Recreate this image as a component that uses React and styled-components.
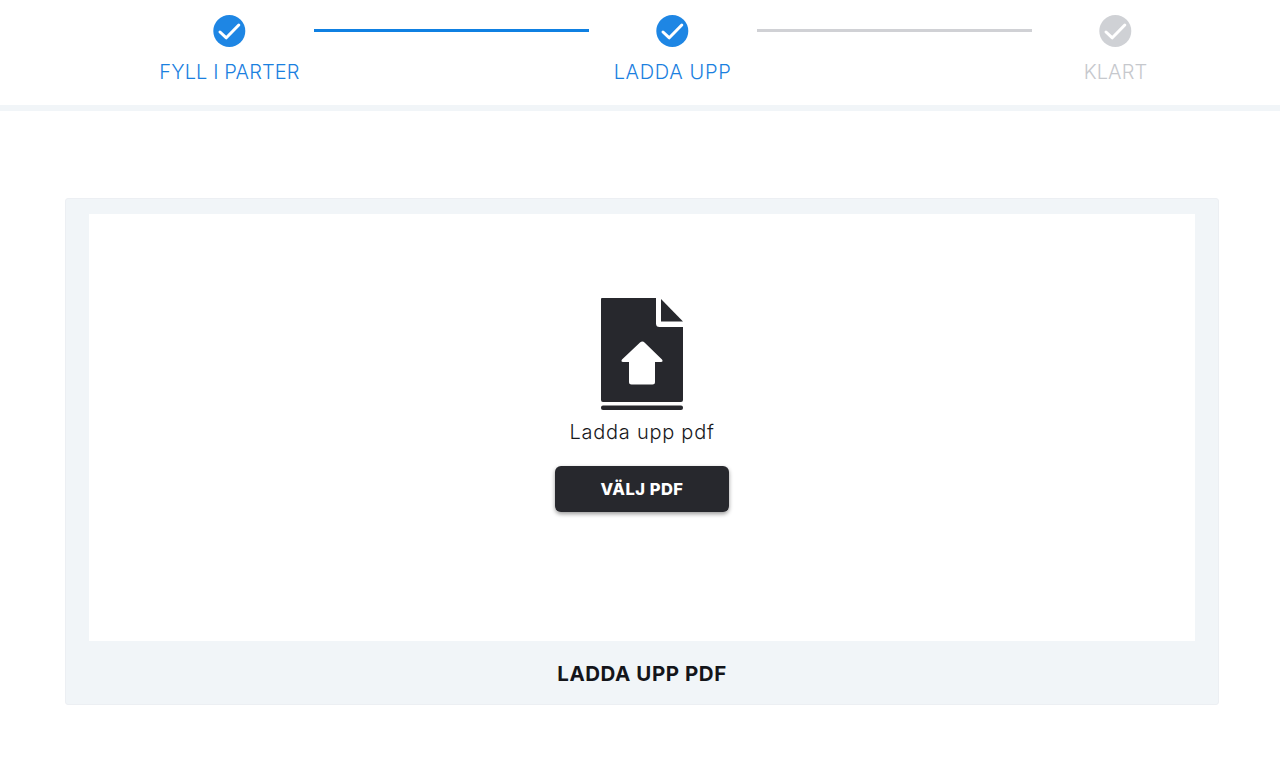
import React from "react";
import styled, { createGlobalStyle } from "styled-components";

const Global = createGlobalStyle`
  html, body { margin: 0; padding: 0; background: #fff; }
  body { font-family: Inter, "Open Sans", "Liberation Sans", sans-serif; }
`;

const Page = styled.div`
  width: 1280px;
  height: 767px;
  overflow: hidden;
  background: #fff;
`;

const Header = styled.header`
  box-sizing: content-box;
  height: 105px;
  border-bottom: 6px solid #f1f5f8;
  display: flex;
  align-items: flex-start;
  padding-left: 146px;
`;

const Step = styled.div`
  width: 167px;
  flex: none;
  display: flex;
  flex-direction: column;
  align-items: center;
  padding-top: 15px;
`;

const Circle = styled.svg`
  width: 33px;
  height: 33px;
  display: block;
`;

const StepLabel = styled.span`
  margin-top: 12px;
  font-size: 20px;
  line-height: 24px;
  font-weight: 300;
  white-space: nowrap;
  letter-spacing: ${(p) => p.$spacing};
  color: ${(p) => (p.$done ? "#1a80e0" : "#c6c8cd")};
`;

const Connector = styled.div`
  width: 275px;
  flex: none;
  height: 3px;
  margin: 29px 0 0 1px;
  background: ${(p) => (p.$done ? "#0f80e2" : "#d0d1d5")};
`;

const Main = styled.main`
  padding: 87px 61px 0 65px;
`;

const Card = styled.section`
  height: 507px;
  box-sizing: border-box;
  background: #f1f5f8;
  border: 1px solid #eceff3;
  border-radius: 3px;
  padding: 15px 23px 0;
  display: flex;
  flex-direction: column;
`;

const DropArea = styled.div`
  height: 427px;
  flex: none;
  background: #fff;
  display: flex;
  flex-direction: column;
  align-items: center;
  padding-top: 84px;
  box-sizing: border-box;
`;

const FileIcon = styled.svg`
  width: 84px;
  height: 113px;
  display: block;
`;

const DropText = styled.div`
  margin-top: 8px;
  font-size: 20px;
  line-height: 26px;
  font-weight: 300;
  letter-spacing: 0.75px;
  color: #17181b;
  white-space: nowrap;
`;

const PickButton = styled.button`
  margin-top: 21px;
  width: 174px;
  height: 46px;
  border: 0;
  border-radius: 6px;
  background: #27282d;
  color: #fff;
  font-family: inherit;
  font-size: 16.5px;
  font-weight: 800;
  letter-spacing: 0.5px;
  box-shadow: 0 2px 4px rgba(0, 0, 0, 0.4);
`;

const Caption = styled.div`
  flex: 1;
  display: flex;
  align-items: center;
  justify-content: center;
  padding-top: 2px;
  font-size: 20.5px;
  font-weight: 700;
  color: #14151a;
  letter-spacing: 0.55px;
`;

const Check = ({ fill }) => (
  <Circle viewBox="0 0 33 33" aria-hidden="true">
    <circle cx="16.3" cy="16" r="16" fill={fill} />
    <path d="M7 17l6.300 5.800L25.800 10" fill="none" stroke="#fff" strokeWidth="3" strokeLinecap="round" strokeLinejoin="round" />
  </Circle>
);

const steps = [
  { label: "FYLL I PARTER", done: true, spacing: "0.12px" },
  { label: "LADDA UPP", done: true, spacing: "0.65px" },
  { label: "KLART", done: false, spacing: "0.1px" },
];

export default function App() {
  return (
    <Page>
      <Global />
      <Header>
        {steps.map((s, i) => (
          <React.Fragment key={s.label}>
            <Step>
              <Check fill={s.done ? "#1e86e4" : "#cfd1d5"} />
              <StepLabel $done={s.done} $spacing={s.spacing}>{s.label}</StepLabel>
            </Step>
            {i < 2 && <Connector $done={s.done && steps[i + 1].done} />}
          </React.Fragment>
        ))}
      </Header>
      <Main>
        <Card>
          <DropArea>
            <FileIcon viewBox="0 0 84 113" aria-hidden="true">
              <path
                fill="#27282d"
                d="M2 0H56V25.500Q56 29 59.500 29H83V102Q83 104 81 104H3Q1 104 1 102V1Q1 0 2 0Z"
              />
              <path fill="#27282d" d="M61 1L83 23.500H61Z" />
              <rect x="1" y="107.500" width="82" height="4.500" rx="2" fill="#27282d" />
              <path
                fill="#fff"
                d="M42.500 43.500Q43.500 43.500 44.500 44.500L62 61.500Q63.500 63.500 61 64H55V84Q55 86.500 52.500 86.500H31.500Q29 86.500 29 84V64H23Q20.500 63.500 22 61.500L40 44.500Q41 43.500 42.500 43.500Z"
              />
            </FileIcon>
            <DropText>Ladda upp pdf</DropText>
            <PickButton type="button">VÄLJ PDF</PickButton>
          </DropArea>
          <Caption>LADDA UPP PDF</Caption>
        </Card>
      </Main>
    </Page>
  );
}
